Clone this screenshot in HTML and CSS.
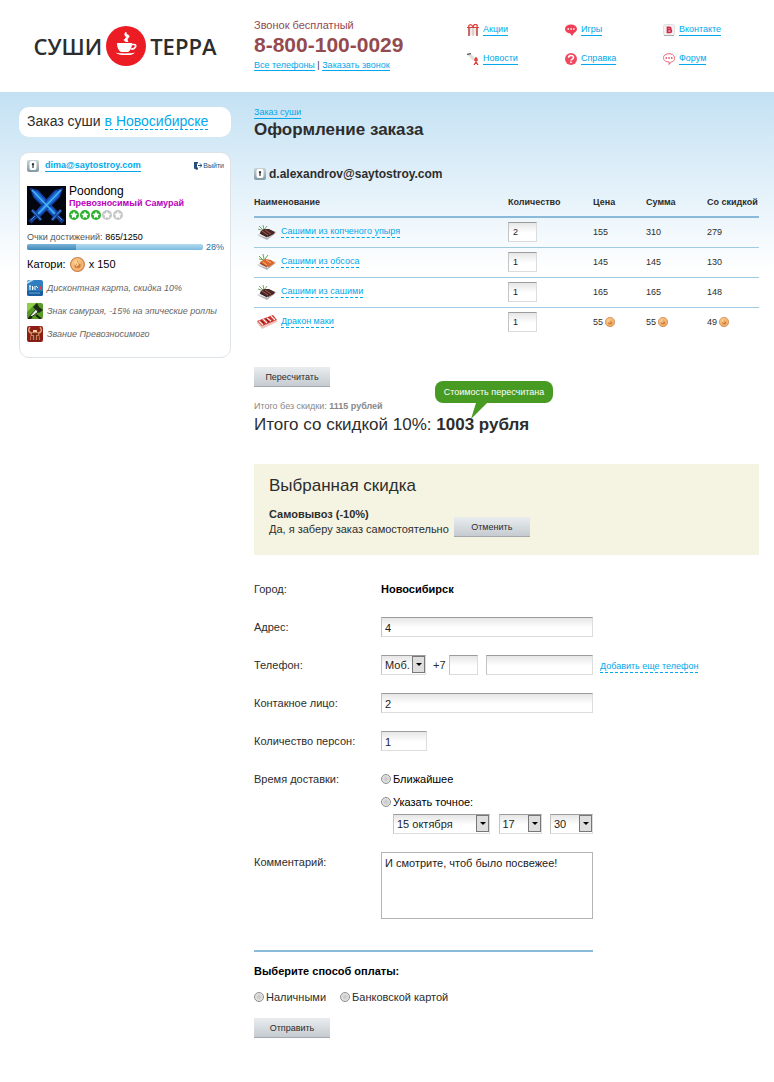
FILE: index.html
```html
<!DOCTYPE html>
<html lang="ru">
<head>
    <meta charset="utf-8">
    <title>Суши Терра - Оформление заказа</title>
    <link rel="stylesheet" href="styles.css">
</head>
<body>
    <!-- shared icons -->
    <svg class="sprite" width="0" height="0" aria-hidden="true">
        <defs>
            <linearGradient id="lockFill" x1="0" y1="0" x2="0" y2="1">
                <stop offset="0" stop-color="#c9d3d6"/><stop offset="1" stop-color="#8199a0"/>
            </linearGradient>
            <radialGradient id="coinFill" cx=".4" cy=".35" r=".7">
                <stop offset="0" stop-color="#ffd99c"/><stop offset="1" stop-color="#e58a3c"/>
            </radialGradient>
        </defs>
        <symbol id="lock" viewBox="0 0 12 12">
            <rect width="12" height="12" rx="2" fill="url(#lockFill)"/>
            <rect x="2.500" y="1" width="7" height="9" rx="2" fill="#fff"/>
            <path d="M6 3a1.300 1.300 0 0 1 .6 2.400V8H5.400V5.400A1.300 1.300 0 0 1 6 3z" fill="#333"/>
        </symbol>
        <symbol id="coin" viewBox="0 0 14 14">
            <circle cx="7" cy="7" r="6.500" fill="url(#coinFill)" stroke="#c98550"/>
            <circle cx="7" cy="7" r="5" fill="none" stroke="#f8c184"/>
            <path d="M7 3l1 3 2 1-1 3H5L4 8l2-1z" fill="#cf7c36"/>
            <path d="M6.500 5l1 2-2 1.500" fill="none" stroke="#ffe6b8"/>
        </symbol>
        <symbol id="star" viewBox="0 0 10 10">
            <circle cx="5" cy="5" r="5" fill="currentColor"/>
            <path d="M5 1.300l1.100 2.300 2.600.3-1.900 1.800.5 2.600L5 7.100 2.700 8.300l.5-2.600L1.300 3.900l2.600-.3z" fill="#fff"/>
        </symbol>
        <symbol id="dish-dark" viewBox="0 0 22 16">
            <path d="M1 11l9-6 11 3-10 7z" fill="#dcdcde"/>
            <path d="M1 11l10 3 10-6-10 8z" fill="#b4b4b8"/>
            <path d="M3 2l4 4M7 1l1 5M2 5l6 2M11 2L8 6" stroke="#5c8a4a" stroke-width=".8" fill="none"/>
            <path d="M4 8l4-3h5l6 3-1 2-6 3-7-3z" fill="#4a2626"/>
            <path d="M6 7l6 4M9 6l6 4" stroke="#9a5b4c" fill="none"/>
            <path d="M4 9l7 4" stroke="#2b1315"/>
        </symbol>
        <symbol id="dish-red" viewBox="0 0 22 16">
            <path d="M1 11l9-6 11 3-10 7z" fill="#dcdcde"/>
            <path d="M1 11l10 3 10-6-10 8z" fill="#b4b4b8"/>
            <path d="M3 2l4 4M7 0l1 5M3 5l6 1M12 1L9 5" stroke="#5fae46" stroke-width="1" fill="none"/>
            <path d="M4 8l5-3 6 1 4 3-6 4-7-2z" fill="#d9662f"/>
            <path d="M7 8l4 3M10 6l5 3" stroke="#ffb278" fill="none"/>
            <path d="M4 9l7 4" stroke="#8c3517"/>
        </symbol>
        <symbol id="dish-roll" viewBox="0 0 22 14">
            <path d="M1 6l16-6 4 5-15 8z" fill="#cf3434"/>
            <path d="M1 6l5 5 15-6v2L6 14 1 8z" fill="#eec4bb"/>
            <path d="M3 6l4 4M7 4l4 4M11 3l4 3M15 1l4 4" stroke="#fff3e4" stroke-width="1.200"/>
            <path d="M5 6l3 2M10 4l3 3" stroke="#6e1a20"/>
        </symbol>
    </svg>

    <header class="header">
        <a class="logo" href="#">
            <span>СУШИ</span>
            <svg width="40" height="40" viewBox="0 0 40 40" aria-hidden="true">
                <circle cx="20" cy="20" r="20" fill="#ec1c24"/>
                <path d="M11 17h15c0 5-2 8-4 9h-7c-2-1-4-4-4-9z" fill="#fff"/>
                <path d="M25.500 18.500h2.500c3 0 2 5-3 4.500" fill="none" stroke="#fff" stroke-width="1.700"/>
                <path d="M9.500 26.500c4 1.200 15 1.200 19.500 0-2 2-4 2.500-6 2.500h-7c-2 0-5-1-6.500-2.500z" fill="#fff"/>
                <path d="M20 15.500c-5-2 2-3 0-5s-1-3 0-4.500c-1 3 3.500 2.500 3 4.500s-3 2-1 5z" fill="#fff" stroke="#fff"/>
            </svg>
            <span>ТЕРРА</span>
        </a>
        <div class="phone">
            <div class="phone-note">Звонок бесплатный</div>
            <div class="phone-number">8-800-100-0029</div>
            <div class="phone-links"><a href="#">Все телефоны</a> | <a href="#">Заказать звонок</a></div>
        </div>
        <nav class="nav">
            <a href="#"><svg width="12" height="12" viewBox="0 0 12 12"><path d="M1 4h10v7H1z" fill="#f0e8e6"/><path d="M2 4v8M10 4v8" stroke="#b64340" stroke-width="1.500"/><path d="M6 4v8" stroke="#c9bab7"/><path d="M0 3.500h12" stroke="#d5433f"/><path d="M6 3C4-1 1 1 2 3M6 3c1-4 5-3 4 0" fill="none" stroke="#e2403f" stroke-width="1.300"/></svg><span>Акции</span></a>
            <a href="#"><svg width="12" height="12" viewBox="0 0 12 12"><ellipse cx="6" cy="5" rx="6" ry="4.500" fill="#ef3e56"/><path d="M5 9h4l-2 3z" fill="#ef3e56"/><path d="M2.500 5h1.500M5.300 5h1.500M8 5h1.500" stroke="#fff" stroke-width="1.500"/></svg><span>Игры</span></a>
            <a href="#"><svg width="12" height="12" viewBox="0 0 12 12"><rect x=".5" y=".5" width="11" height="11" rx="2" fill="#f2f0f0" stroke="#e2dfe0"/><path d="M1 11.500h10" stroke="#aaa"/><path d="M4.500 2.500v6.500M4 3.300h2.500c1.700 0 1.700 2.300 0 2.300H5h2c1.900 0 1.900 2.700 0 2.700H4" fill="none" stroke="#d12a4c" stroke-width="1.700"/></svg><span>Вконтакте</span></a>
            <a href="#"><svg width="12" height="12" viewBox="0 0 12 12"><path d="M0 1l3-1 5 5-2 3z" fill="#dfe2d8"/><path d="M0 1.500L4 .5" stroke="#666" stroke-width="1.300"/><circle cx="9" cy="5.500" r="1.300" fill="#e03a3a"/><path d="M7 7h4M9 6v3l-2 3M9 9l2 3" stroke="#e03a3a" fill="none" stroke-width="1.300"/></svg><span>Новости</span></a>
            <a href="#"><svg width="12" height="12" viewBox="0 0 12 12"><circle cx="6" cy="6" r="6" fill="#ef4a62"/><path d="M3.500 4.700c0-3 5-3 5-.3 0 1.800-2.400 1.500-2.400 3.200M6 8.500V10" fill="none" stroke="#fff" stroke-width="1.500"/></svg><span>Справка</span></a>
            <a href="#"><svg width="12" height="12" viewBox="0 0 12 12"><path d="M6 .7c7 0 7 8 2.500 8L6 11.500l.3-2.500C-1.500 9-1.500.7 6 .7z" fill="#fff" stroke="#ef6377"/><path d="M2.500 5H4M5.300 5h1.500M8 5h1.500" stroke="#ef3e56" stroke-width="1.300"/></svg><span>Форум</span></a>
        </nav>
    </header>

    <div class="page">
        <aside class="sidebar">
            <div class="city">Заказ суши <a href="#">в Новосибирске</a></div>
            <div class="card">
                <div class="card-top">
                    <svg width="12" height="12"><use href="#lock"/></svg>
                    <a class="card-mail" href="#">dima@saytostroy.com</a>
                    <a class="exit" href="#"><svg width="8" height="8" viewBox="0 0 8 8"><path d="M0 0h4v1.500H3v4h1V7L3 8 0 6.500z" fill="#234f78"/><path d="M4 3.500h4M6 1.500l2 2-2 2" stroke="#234f78" fill="none"/></svg>Выйти</a>
                </div>
                <div class="user">
                    <svg width="39" height="39" viewBox="0 0 39 39" aria-hidden="true">
                        <rect width="39" height="39" fill="#04060f"/>
                        <g stroke="#123fa4" stroke-width="1.500">
                            <path d="M4 3l7 2 19 21-4 4L7 11z" fill="#1d6bd0"/>
                            <path d="M35 3l-7 2L9 26l4 4 19-19z" fill="#1d6bd0"/>
                        </g>
                        <path d="M5 4l23 24M34 4L11 28" stroke="#46b6f5" stroke-width="1.500"/>
                        <path d="M5 24l9 10M34 24l-9 10" stroke="#1a4da8" stroke-width="3"/>
                        <path d="M10 29l-7 7M29 29l7 7" stroke="#143b8c" stroke-width="4"/>
                        <path d="M5 24l9 10M34 24l-9 10M8 30l-4 4M31 30l4 4" stroke="#3f8fe0"/>
                    </svg>
                    <div>
                        <div class="user-name">Poondong</div>
                        <div class="user-rank">Превозносимый Самурай</div>
                        <div class="stars">
                            <svg class="on" width="10" height="10"><use href="#star"/></svg>
                            <svg class="on" width="10" height="10"><use href="#star"/></svg>
                            <svg class="on" width="10" height="10"><use href="#star"/></svg>
                            <svg width="10" height="10"><use href="#star"/></svg>
                            <svg width="10" height="10"><use href="#star"/></svg>
                        </div>
                    </div>
                </div>
                <div class="points">Очки достижений: <span>865/1250</span></div>
                <div class="progress">
                    <div class="progress-bar"><div class="progress-done" style="width: 28%"></div></div>
                    <span>28%</span>
                </div>
                <div class="katori">Катори: <svg width="15" height="15"><use href="#coin"/></svg> x 150</div>
                <ul class="badges">
                    <li><svg width="16" height="16" viewBox="0 0 16 16"><rect width="16" height="16" rx="2" fill="#2f7fc0"/><path d="M0 11h16v3a2 2 0 0 1-2 2H2a2 2 0 0 1-2-2z" fill="#1b5e9d"/><path d="M0 2l3-2h4L0 4z" fill="#b5dbf2"/><path d="M2 6h2M3 6v4M5.500 6v4M5 8h2M8 6v4M9 6l2 2" stroke="#fff"/><circle cx="13.500" cy="8" r="1.700" fill="#e83a45"/><path d="M2 13h11" stroke="#69abd9"/></svg>Дисконтная карта, скидка 10%</li>
                    <li><svg width="16" height="16" viewBox="0 0 16 16"><rect width="16" height="16" rx="2" fill="#579c25"/><path d="M0 0h9L0 9z" fill="#8fce4b"/><path d="M6 4l4-4 2 4 4 3-4 3z" fill="#1c2a18"/><path d="M2 14l7-8 2 3-5 4z" fill="#e5ece0" stroke="#26331f"/><path d="M9 12l5 4M1 16l4-2" stroke="#152010" stroke-width="2"/></svg>Знак самурая, -15% на эпические роллы</li>
                    <li><svg width="16" height="16" viewBox="0 0 16 16"><rect width="16" height="16" rx="2" fill="#8e1d18"/><path d="M3 1C0 5 3 7 5 7M13 1c3 4 0 6-2 6" fill="none" stroke="#d9a36c" stroke-width="1.500"/><path d="M4 6h8l1 8H3z" fill="#c88350"/><path d="M5 8h6M8 8v6M5 10v5M11 10v5" stroke="#611712" stroke-width="1.500"/><path d="M6 4h4v2H6z" fill="#f2d1a4"/></svg>Звание Превозносимого</li>
                </ul>
            </div>
        </aside>

        <main class="main">
            <a class="crumb" href="#">Заказ суши</a>
            <h1>Оформление заказа</h1>
            <div class="account"><svg width="12" height="12"><use href="#lock"/></svg>d.alexandrov@saytostroy.com</div>

            <form>
                <table class="order">
                    <thead>
                        <tr>
                            <th>Наименование</th>
                            <th class="col-count">Количество</th>
                            <th class="col-price">Цена</th>
                            <th class="col-sum">Сумма</th>
                            <th class="col-total">Со скидкой</th>
                        </tr>
                    </thead>
                    <tbody>
                        <tr>
                            <td><div class="dish"><svg width="22" height="16"><use href="#dish-dark"/></svg><a href="#">Сашими из копченого упыря</a></div></td>
                            <td><input class="field count" type="text" value="2" aria-label="Количество: Сашими из копченого упыря"></td>
                            <td>155</td>
                            <td>310</td>
                            <td>279</td>
                        </tr>
                        <tr>
                            <td><div class="dish"><svg width="22" height="16"><use href="#dish-red"/></svg><a href="#">Сашими из обсоса</a></div></td>
                            <td><input class="field count" type="text" value="1" aria-label="Количество: Сашими из обсоса"></td>
                            <td>145</td>
                            <td>145</td>
                            <td>130</td>
                        </tr>
                        <tr>
                            <td><div class="dish"><svg width="22" height="16"><use href="#dish-dark"/></svg><a href="#">Сашими из сашими</a></div></td>
                            <td><input class="field count" type="text" value="1" aria-label="Количество: Сашими из сашими"></td>
                            <td>165</td>
                            <td>165</td>
                            <td>148</td>
                        </tr>
                        <tr>
                            <td><div class="dish"><svg width="22" height="16"><use href="#dish-roll"/></svg><a href="#">Дракон маки</a></div></td>
                            <td><input class="field count" type="text" value="1" aria-label="Количество: Дракон маки"></td>
                            <td>55<svg class="coin" width="10" height="10"><use href="#coin"/></svg></td>
                            <td>55<svg class="coin" width="10" height="10"><use href="#coin"/></svg></td>
                            <td>49<svg class="coin" width="10" height="10"><use href="#coin"/></svg></td>
                        </tr>
                    </tbody>
                </table>
                <button class="btn" type="button">Пересчитать</button>
            </form>

            <div class="totals">
                <div class="total-old">Итого без скидки: <b>1115 рублей</b></div>
                <div class="total-new">Итого со скидкой 10%: <b>1003 рубля</b></div>
                <div class="tip">Стоимость пересчитана<svg width="16" height="16" viewBox="0 0 16 16"><path d="M5 0h11L0 16z" fill="#479a22"/></svg></div>
            </div>

            <section class="discount">
                <h2>Выбранная скидка</h2>
                <div class="discount-body">
                    <div class="discount-text"><b>Самовывоз (-10%)</b><br>Да, я заберу заказ самостоятельно</div>
                    <button class="btn" type="button">Отменить</button>
                </div>
            </section>

            <form class="delivery">
                <div class="row">
                    <span class="label">Город:</span>
                    <b class="town">Новосибирск</b>
                </div>
                <div class="row">
                    <label class="label" for="address">Адрес:</label>
                    <input class="field wide" type="text" id="address" value="4">
                </div>
                <div class="row">
                    <label class="label" for="phone">Телефон:</label>
                    <div class="phone-fields">
                        <select class="field kind" aria-label="Тип телефона"><option>Моб.</option></select>
                        <span class="prefix">+7</span>
                        <input class="field code" type="text" aria-label="Код">
                        <input class="field number" type="text" id="phone">
                    </div>
                    <a class="add-phone" href="#">Добавить еще телефон</a>
                </div>
                <div class="row">
                    <label class="label" for="person">Контакное лицо:</label>
                    <input class="field wide" type="text" id="person" value="2">
                </div>
                <div class="row">
                    <label class="label" for="persons">Количество персон:</label>
                    <input class="field persons" type="text" id="persons" value="1">
                </div>
                <div class="row">
                    <span class="label">Время доставки:</span>
                    <div class="times">
                        <label class="radio"><input type="radio" name="time">Ближайшее</label>
                        <label class="radio"><input type="radio" name="time">Указать точное:</label>
                        <div class="exact">
                            <select class="field day" aria-label="День"><option>15 октября</option></select>
                            <select class="field clock" aria-label="Часы"><option>17</option></select>
                            <select class="field clock" aria-label="Минуты"><option>30</option></select>
                        </div>
                    </div>
                </div>
                <div class="row">
                    <label class="label" for="comment">Комментарий:</label>
                    <textarea class="comment" id="comment">И смотрите, чтоб было посвежее!</textarea>
                </div>
                <div class="payment">
                    <b>Выберите способ оплаты:</b>
                    <div class="pay-kinds">
                        <label class="radio"><input type="radio" name="pay">Наличными</label>
                        <label class="radio"><input type="radio" name="pay">Банковской картой</label>
                    </div>
                    <button class="btn" type="submit">Отправить</button>
                </div>
            </form>
        </main>
    </div>
</body>
</html>
```
FILE: styles.css
```css
* {
    box-sizing: border-box;
}

body {
    margin: 0;
    background: #fff;
    color: #2d2d2d;
    font-family: "Liberation Sans", Arial, sans-serif;
    font-size: 9px;
    line-height: 14px;
}

a {
    color: #00a8ec;
    text-decoration: none;
}

svg {
    display: block;
    flex: none;
}

.sprite {
    position: absolute;
}

/* header */
.header {
    display: grid;
    grid-template-columns: 212px 190px 1fr;
    column-gap: 23px;
    height: 92px;
    padding: 18px 15px 0 19px;
}

.logo {
    display: flex;
    align-items: center;
    justify-content: center;
    gap: 4px;
    height: 56px;
    color: #2d2d2d;
    font-family: "Open Sans", sans-serif;
    font-size: 22px;
    font-weight: 600;
}

.phone-note {
    color: #944a4e;
    font-size: 11px;
}

.phone-number {
    color: #944a4e;
    font-size: 21px;
    font-weight: bold;
    line-height: 26px;
}

.phone-links a,
.crumb,
.nav span {
    border-bottom: 1px solid #00a8ec;
    line-height: 11px;
}

.nav {
    display: grid;
    grid-template-columns: repeat(3, 98px);
    grid-auto-rows: 29px;
    align-content: start;
}

.nav a {
    display: flex;
    align-items: center;
    gap: 4px;
    height: 24px;
}

/* page */
.page {
    display: grid;
    grid-template-columns: 212px 1fr;
    column-gap: 23px;
    align-items: start;
    padding: 15px 15px 45px 19px;
    background: linear-gradient(#c3e1f3, #fff 180px);
}

.city {
    height: 30px;
    margin-bottom: 15px;
    padding-left: 8px;
    border-radius: 10px;
    background: #fff;
    font-size: 14px;
    line-height: 28px;
}

.city a {
    border-bottom: 1px dashed #00a8ec;
}

.card {
    height: 206px;
    padding: 6px 6px 0 7px;
    border: 1px solid #dde3e6;
    border-radius: 10px;
    background: #fff;
}

.card-top {
    display: flex;
    align-items: center;
    height: 14px;
}

.card-mail {
    margin-left: 6px;
    border-bottom: 1px solid #00a8ec;
    font-weight: bold;
    line-height: 11px;
}

.exit {
    display: flex;
    align-items: center;
    gap: 1px;
    margin-left: auto;
    color: #234f78;
    font-size: 7px;
}

.user {
    display: flex;
    gap: 3px;
    margin-top: 13px;
    color: #000;
}

.user-name {
    font-size: 12px;
    line-height: 11px;
}

.user-rank {
    color: #bb00bb;
    font-weight: bold;
    line-height: 13px;
}

.stars {
    display: flex;
    gap: 1px;
    color: #c8c8c8;
}

.stars .on {
    color: #2bb12b;
}

.points {
    margin-top: 5px;
    color: #555;
}

.points span {
    color: #000;
}

.progress {
    display: flex;
    align-items: center;
    gap: 3px;
    height: 6px;
    color: #1f70a0;
}

.progress-bar {
    flex: 1;
    height: 6px;
    border-radius: 2px;
    background: linear-gradient(#b5dcf1, #7dbbe0);
    overflow: hidden;
}

.progress-done {
    height: 6px;
    background: linear-gradient(#7cb4d8, #3d88b8);
}

.katori {
    display: flex;
    align-items: center;
    gap: 4px;
    margin-top: 6px;
    color: #000;
    font-size: 11px;
    line-height: 16px;
}

.badges {
    margin: 8px 0 0;
    padding: 0;
    list-style: none;
}

.badges li {
    display: flex;
    align-items: center;
    gap: 4px;
    height: 16px;
    margin-bottom: 7px;
    color: #666;
    font-style: italic;
    white-space: nowrap;
}

/* main column */
.crumb {
    display: table;
}

h1 {
    margin: 1px 0 0;
    font-size: 17px;
    line-height: 20px;
}

.account {
    display: flex;
    align-items: center;
    gap: 3px;
    margin: 27px 0 13px;
    font-size: 12px;
    font-weight: bold;
}

.order {
    width: 100%;
    margin-bottom: 30px;
    border-collapse: collapse;
    table-layout: fixed;
}

.order th {
    height: 23px;
    padding: 0 0 7px;
    border-bottom: 2px solid #8abada;
    text-align: left;
    white-space: nowrap;
}

.order td {
    height: 30px;
    padding: 0;
    border-bottom: 1px solid #9fcbe2;
}

.order tr:last-child td {
    border-bottom: 0;
}

.col-count {
    width: 85px;
}

.col-price {
    width: 53px;
}

.col-sum {
    width: 61px;
}

.col-total {
    width: 52px;
}

.dish {
    display: flex;
    align-items: center;
    gap: 3px;
    padding-left: 2px;
}

.dish a,
.add-phone {
    border-bottom: 1px dashed #00a8ec;
    line-height: 11px;
}

.coin {
    display: inline-block;
    margin-left: 2px;
    vertical-align: -2px;
}

.btn {
    display: block;
    width: 76px;
    height: 20px;
    padding: 0;
    border: 0;
    border-bottom: 1px solid #a3a9ac;
    background: linear-gradient(#e9edf0, #c5cbd0);
    color: #2d2d2d;
    font-family: inherit;
    font-size: 9px;
}

.field {
    height: 20px;
    padding: 2px 3px 0;
    border: 1px solid #dcdcdc;
    border-top-color: #9c9c9c;
    border-left-color: #c4c4c4;
    border-radius: 0;
    background: linear-gradient(#e6e6e6, #fff 10px);
    color: #1c1c1c;
    font-family: inherit;
    font-size: 11px;
}

.count {
    display: block;
    width: 29px;
    padding: 0 4px;
    font-size: 9px;
}

select.field {
    padding: 0 3px;
    appearance: none;
    background:
        url("data:image/svg+xml,%3Csvg xmlns='http://www.w3.org/2000/svg' width='13' height='17'%3E%3Crect x='.5' y='.5' width='12' height='16' fill='%23dedede' stroke='%23777'/%3E%3Cpath d='M4 7h6l-3 3z' fill='%23000'/%3E%3C/svg%3E") no-repeat right 0 top 0,
        linear-gradient(#e6e6e6, #fff 10px);
}

/* totals */
.totals {
    position: relative;
    margin-top: 12px;
}

.total-old {
    color: #888;
}

.total-new {
    font-size: 17px;
    line-height: 24px;
}

.tip {
    position: absolute;
    top: -18px;
    left: 181px;
    width: 118px;
    height: 22px;
    border-radius: 8px;
    background: #479a22;
    color: #fff;
    line-height: 22px;
    text-align: center;
    white-space: nowrap;
}

.tip svg {
    position: absolute;
    top: 22px;
    left: 36px;
}

.discount {
    height: 91px;
    margin: 27px 0 24px;
    padding: 12px 15px;
    background: #f5f4e2;
}

h2 {
    margin: 0 0 11px;
    font-size: 17px;
    font-weight: normal;
    line-height: 20px;
}

.discount-body {
    display: flex;
    align-items: flex-end;
    gap: 5px;
}

.discount-text {
    font-size: 11px;
    line-height: 15px;
}

/* delivery form */
.delivery {
    font-size: 11px;
    line-height: 20px;
}

.row {
    display: flex;
    align-items: flex-start;
    min-height: 20px;
    margin-bottom: 18px;
}

.label {
    flex: none;
    width: 127px;
}

.town {
    color: #000;
}

.wide {
    width: 212px;
}

.phone-fields {
    display: flex;
    width: 212px;
}

.kind {
    width: 45px;
}

.prefix {
    margin: 0 3px 0 7px;
}

.code {
    width: 29px;
    margin-right: 8px;
}

.number {
    flex: 1;
    min-width: 0;
}

.add-phone {
    margin: 6px 0 0 7px;
    font-size: 9px;
}

.persons {
    width: 46px;
}

.times {
    width: 212px;
    color: #000;
}

.radio {
    display: flex;
    align-items: center;
    gap: 2px;
}

.times .radio + .radio {
    margin-top: 3px;
}

.radio input {
    width: 10px;
    height: 10px;
    margin: 0;
    border: 1px solid #8e8e8e;
    border-radius: 50%;
    appearance: none;
    background: radial-gradient(#c4c4c4, #f4f4f4);
}

.radio input:checked {
    background: radial-gradient(#222 30%, #f4f4f4 40%);
}

.exact {
    display: flex;
    justify-content: space-between;
    margin: 2px 0 0 12px;
}

.day {
    width: 97px;
}

.clock {
    width: 43px;
}

.comment {
    width: 212px;
    height: 67px;
    padding: 3px;
    border: 1px solid #b4b4b4;
    color: #1c1c1c;
    font-family: inherit;
    font-size: 11px;
    line-height: 14px;
    resize: none;
}

.payment {
    width: 339px;
    margin-top: 31px;
    padding-top: 9px;
    border-top: 2px solid #8abada;
}

.payment b {
    color: #000;
}

.pay-kinds {
    display: flex;
    gap: 14px;
    margin: 6px 0 11px;
}
```
